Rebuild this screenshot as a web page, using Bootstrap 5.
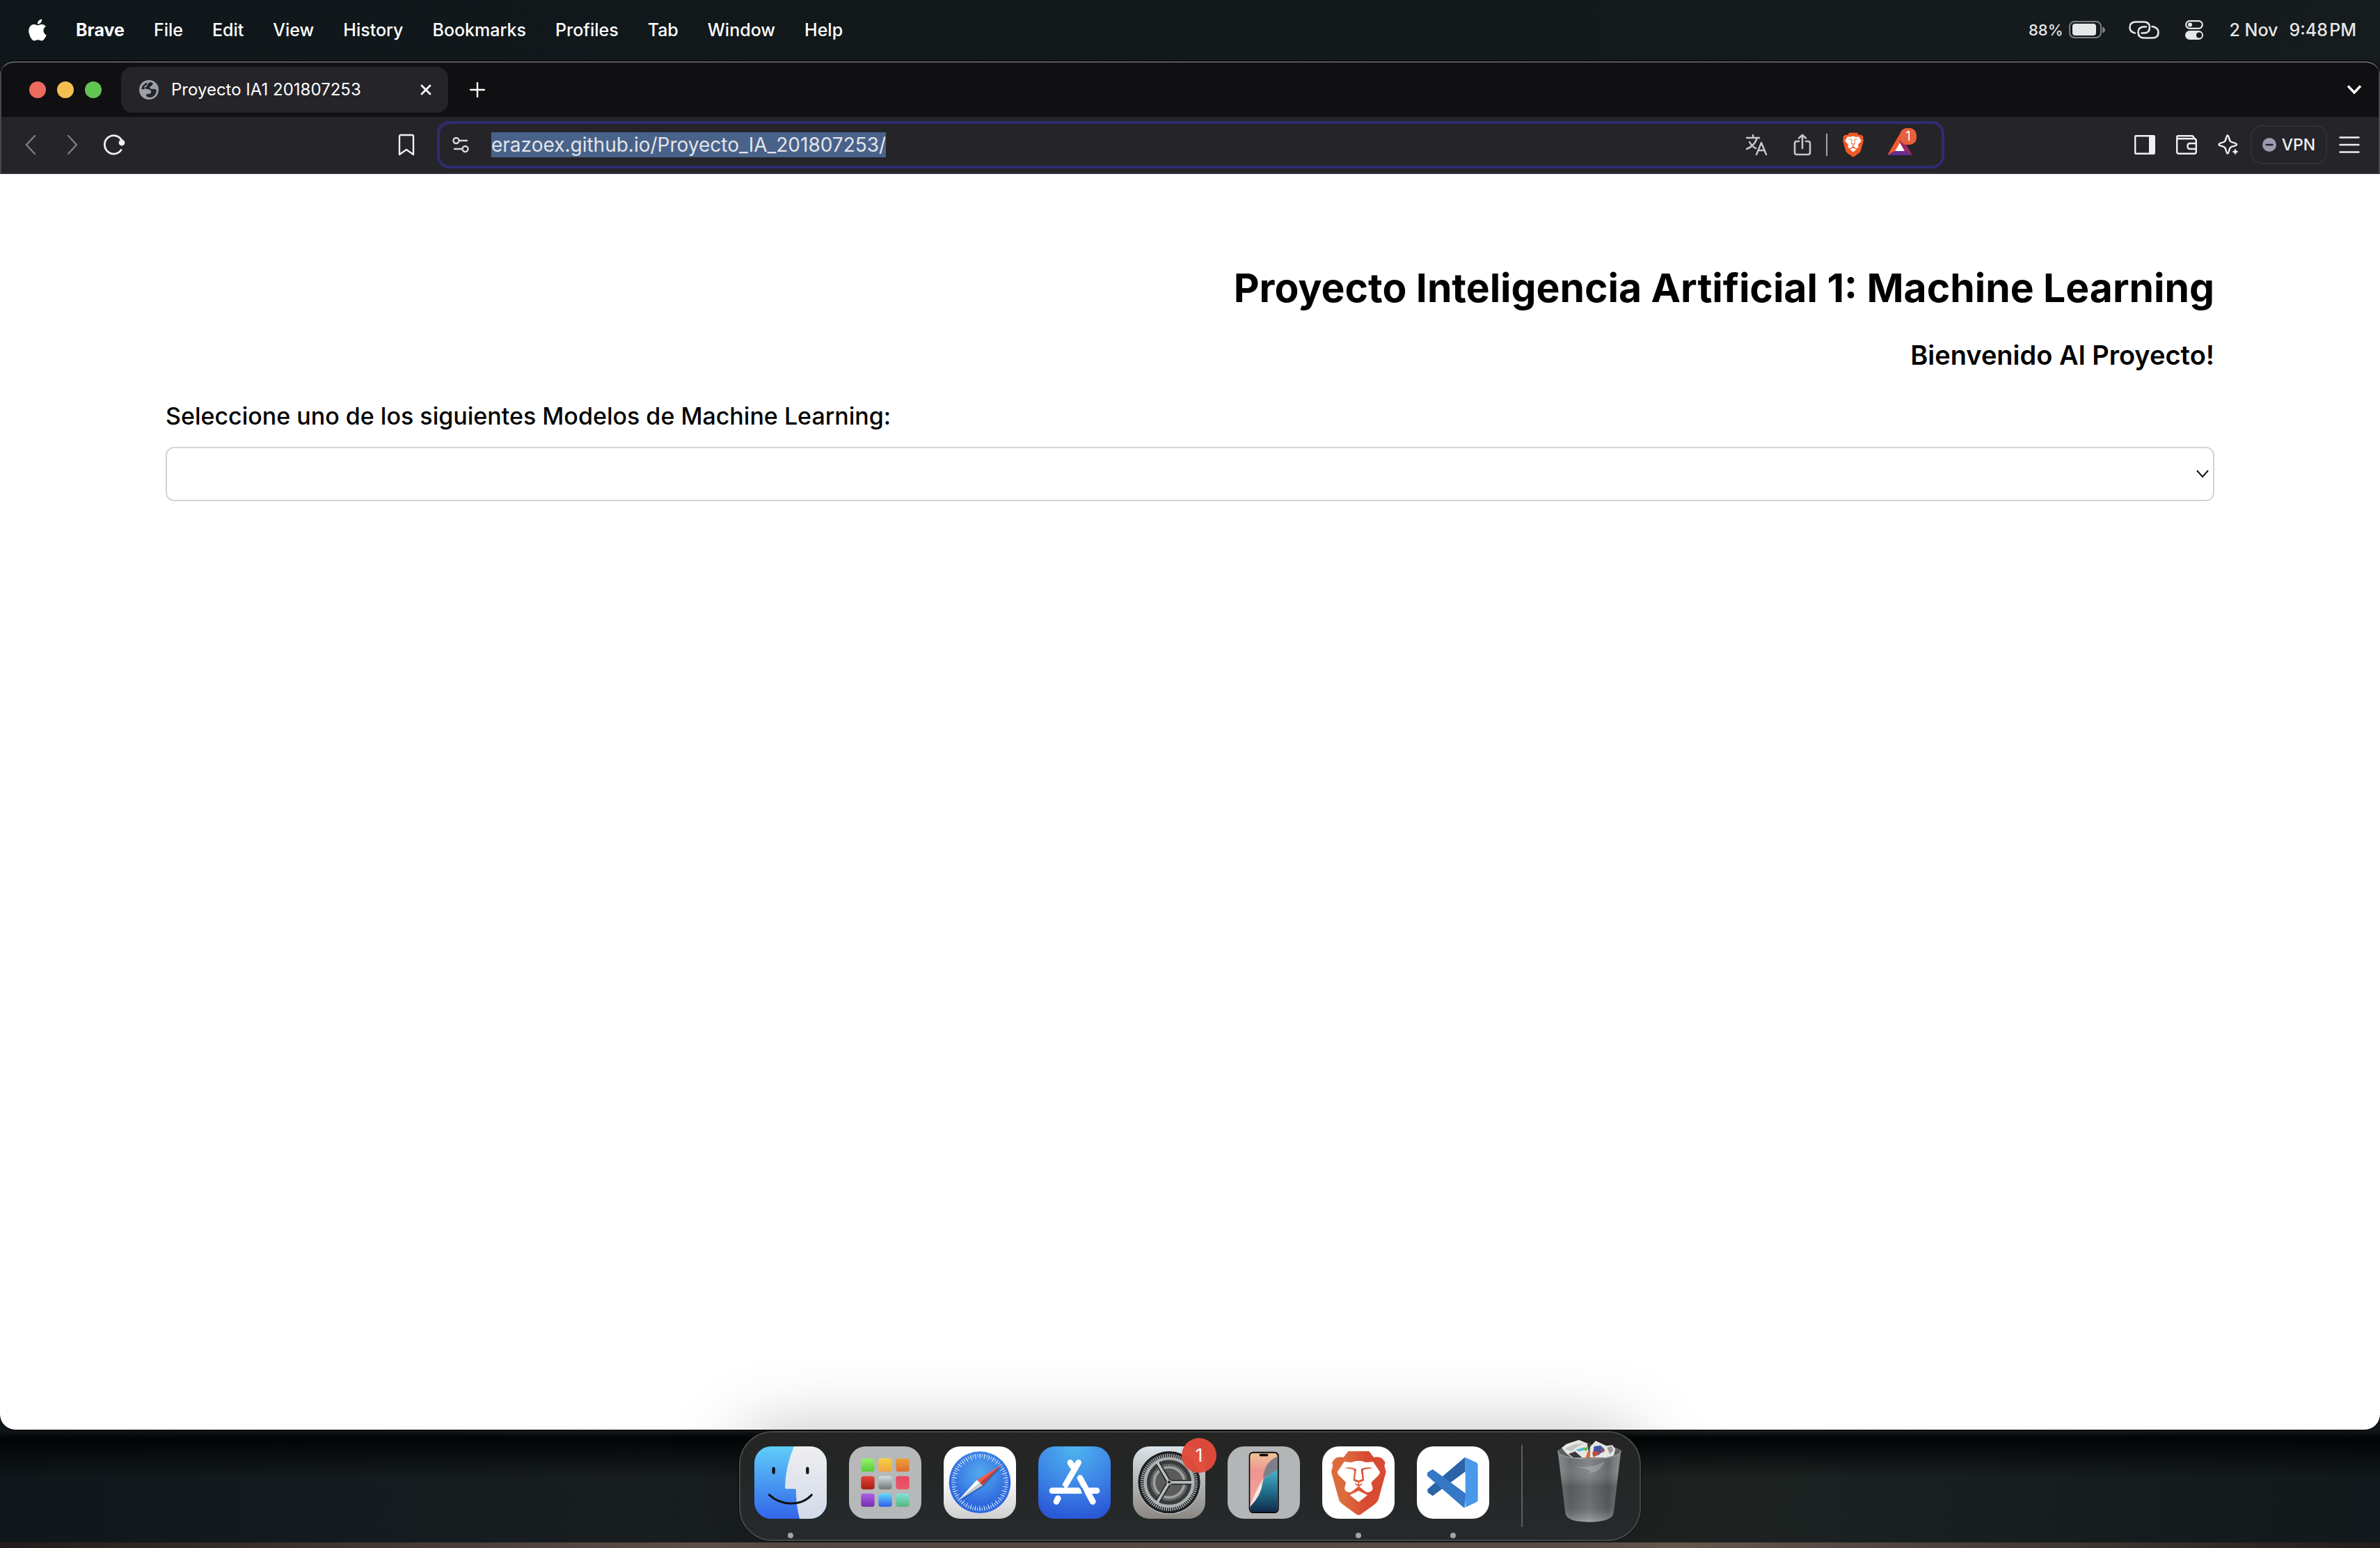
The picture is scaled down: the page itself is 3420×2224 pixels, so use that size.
<!DOCTYPE html>
<html lang="es">
<head>
<meta charset="utf-8">
<meta name="viewport" content="width=device-width, initial-scale=1">
<title>Proyecto IA1 201807253</title>
<link href="https://cdn.jsdelivr.net/npm/bootstrap@5.3.0/dist/css/bootstrap.min.css" rel="stylesheet">
<style>
body{font-family:Inter,"Liberation Sans",sans-serif;font-size:26px;line-height:32px;color:#000;
  background:linear-gradient(180deg,#14191b calc(100% - 12px),transparent calc(100% - 5px)) no-repeat,
  linear-gradient(180deg,transparent calc(100% - 12px),#231b1b calc(100% - 8px)) no-repeat,
  #14191b}
body{background:
  linear-gradient(180deg,transparent calc(100% - 170px),#020405 calc(100% - 158px),transparent calc(100% - 100px)) no-repeat,
  linear-gradient(90deg,#231b1b,#5f4f48 30%,#66564e 70%,#231d1c) bottom/100% 8px no-repeat,
  linear-gradient(90deg,#10171a,#191e21 30%,#1e2322 70%,#12181b)}
svg{display:block;flex:none}
.plain{background:none;border:0;padding:0;color:inherit;display:flex;align-items:center;justify-content:center}
.menubar{height:88px;padding:0 34px 2px 41px;color:#fff;font-size:25px;font-weight:500;background:linear-gradient(90deg,#10171a,#161b1d)}
.menubar .menus{gap:42px}
.menubar a{color:inherit;text-decoration:none}
.status-area{color:#e6e7e7}
.status-area .extras{gap:37px;margin:0 38px 0 34px}
.pct{font-size:22px}
.win{border-top:2px solid #5c5d5e;border-radius:20px 20px 22px 22px;background:#fff;overflow:hidden;margin-bottom:2px;box-shadow:0 0 0 1px #000}
.strip,.toolbar{border:solid #47484a;border-width:0 2px}
.strip{height:78px;background:#101012;padding:0 24px 0 40px;color:#fff}
.light{width:24px;height:24px;border-radius:50%}
.light-close{background:#ed6a5f}
.light-min{background:#f5bf4f}
.light-max{background:#61c554}
.lights{gap:16px}
.tab-item{width:470px;height:66px;background:#252429;border-radius:16px;margin:0 31px 0 28px;padding:0 24px 0 26px;font-size:24px;gap:18px}
.toolbar{height:82px;background:#252429;border-bottom:2px solid #343138;color:#f0f0f4}
.toolbar .side-l{width:626px;padding:0 14px 0 12px}
.toolbar .side-r{width:624px;padding-right:12px;gap:2px}
.tb{width:60px;height:60px}
.omni{height:68px;border:4px solid #2f2c73;border-radius:18px;padding:0 42px 0 18px}
.omni input{background:transparent;border:0;outline:0;color:#e4e4e8;font-size:28px;line-height:36px;height:36px;padding:0;margin-left:32px;min-width:0}
.omni input::selection{background:rgba(73,99,140,.99);color:#e4e4e8}
.acts{gap:20px;color:#c5c5ca}
.acts .rule{width:2px;height:32px;background:#a5a5aa}
.shields{color:#f05a24}
.count{left:22px;top:-8px;min-width:24px;height:24px;border-radius:10px;background:#e8603c;color:#fff;font-size:18px;line-height:24px;text-align:center}
.vpn{width:110px;height:56px;border:2px solid #313036;border-radius:16px;font-size:23px;gap:8px;font-weight:500}
.page-body{padding:128px 238px 0}
.page-body h1{font-size:57px;line-height:72px;font-weight:700;margin-bottom:32px}
.page-body h2{font-size:38px;line-height:56px;font-weight:600;margin-bottom:32px}
.page-body label{font-size:34px;line-height:56px;font-weight:500;margin-bottom:16px}
.pick{height:78px;border:2px solid #d1d5db;border-radius:12px;font-size:32px;
  background-image:url("data:image/svg+xml,%3Csvg xmlns='http://www.w3.org/2000/svg' viewBox='0 0 18 12'%3E%3Cpath fill='none' stroke='%23111' stroke-width='2' d='M1 1l8 9 8-9'/%3E%3C/svg%3E");background-size:18px 12px;background-position:right 6px center}
.dock{height:158px;margin-bottom:10px;border:2px solid #454849;border-radius:48px;padding:20px;gap:32px;background:linear-gradient(180deg,#242423,#262a2c);box-shadow:0 0 100px rgba(0,0,0,.25),0 0 0 1px rgba(0,0,0,.5)}
.dock .plain{width:104px;height:104px;position:relative}
.tile{width:104px;height:104px;border-radius:24px}
.run::after{content:"";position:absolute;left:48px;top:124px;width:8px;height:8px;border-radius:50%;background:#a3a4a6}
.notice{left:70px;top:-12px;width:50px;height:50px;border-radius:50%;background:#e24b3b;color:#fff;font-size:26px;line-height:50px;text-align:center;opacity:.97}
.split{width:2px;height:118px;background:#5b5d5e;margin:-2px 12px 0 14px}
</style>
<script src="https://cdn.jsdelivr.net/npm/bootstrap@5.3.0/dist/js/bootstrap.bundle.min.js"></script>
</head>
<body class="d-flex flex-column min-vh-100">
<svg width="0" height="0" class="position-absolute" aria-hidden="true">
  <defs>
    <symbol id="lion" viewBox="156 190 242 284">
      <path d="M232 195H322L342 221Q368 216 380 228L392 243L388 257L395 284L363 400Q360 415 340 428L288 466Q277 474 266 466L214 428Q194 415 191 400L159 284L166 257L162 243L174 228Q186 216 212 221Z"/>
      <path fill="#fff" d="M215 240L245 243Q262 236 277 236Q292 236 309 243L339 240L369 284Q369 292 362 299L333 328Q330 336 336 346Q342 364 326 370Q316 374 306 369L277 345L248 369Q238 374 228 370Q212 364 218 346Q224 336 221 328L192 299Q185 292 185 284ZM277 365L315 384L277 414L239 384Z"/>
      <path d="M215 268Q240 261 264 270L268 276L262 314L277 320L292 314L286 276L290 270Q314 261 339 268L306 272Q296 273 296 282L300 318L277 328L254 318L258 282Q258 273 248 272Z"/>
      <path fill="#fff" d="M264 268H290L287 276L293 315L277 321L261 315L267 276Z"/>
      <path d="M254 320L277 328L300 320L304 328L281 345L277 349L273 345L250 328Z" fill="#fff"/>
      <path fill="none" stroke="currentColor" stroke-width="5" d="M255 317Q263 326 277 326Q291 326 299 317M277 326V347M277 345L262 334M277 345L292 334"/>
    </symbol>
  </defs>
</svg>

<header class="menubar d-flex align-items-center justify-content-between">
  <nav class="menus d-flex align-items-center" aria-label="Barra de menús">
    <svg width="26" height="32" viewBox="2 0 20 24" fill="#fff"><path d="M12.152 6.896c-.948 0-2.415-1.078-3.96-1.04-2.04.027-3.91 1.183-4.961 3.014-2.117 3.675-.546 9.103 1.519 12.09 1.013 1.454 2.208 3.09 3.792 3.039 1.52-.065 2.09-.987 3.935-.987 1.831 0 2.35.987 3.96.948 1.637-.026 2.676-1.48 3.676-2.948 1.156-1.688 1.636-3.325 1.662-3.415-.039-.013-3.182-1.221-3.22-4.857-.026-3.04 2.48-4.494 2.597-4.559-1.429-2.09-3.623-2.324-4.39-2.376-2-.156-3.675 1.09-4.61 1.09zM15.53 3.83c.843-1.012 1.4-2.427 1.245-3.83-1.207.052-2.662.805-3.532 1.818-.78.896-1.454 2.338-1.273 3.714 1.338.104 2.715-.688 3.559-1.701"/></svg>
    <a href="#" class="fw-bold">Brave</a><a href="#">File</a><a href="#">Edit</a><a href="#">View</a><a href="#">History</a><a href="#">Bookmarks</a><a href="#">Profiles</a><a href="#">Tab</a><a href="#">Window</a><a href="#">Help</a>
  </nav>
  <div class="status-area d-flex align-items-center">
    <span class="pct">88%</span>
    <svg class="ms-2" width="52" height="26" viewBox="0 0 52 26"><rect x="1" y="1" width="45" height="23" rx="7" fill="none" stroke="#7c8081" stroke-width="2"/><rect x="5" y="4" width="34" height="17" rx="4" fill="#e6e7e7"/><path d="M48 8.500q4 1 4 4.500t-4 4.500z" fill="#7c8081"/></svg>
    <div class="extras d-flex align-items-center">
      <svg width="44" height="26" viewBox="0 0 44 26" fill="none" stroke="#e6e7e7" stroke-width="2.600" stroke-linecap="round"><path d="M9 17.500Q1.500 16 1.500 9.500Q1.500 1.500 10 1.500H21.500Q30 1.500 30 9.500Q30 17.500 21.500 17.500H18.500"/><path d="M33.500 8Q42.500 9.500 42.500 16.500Q42.500 24.500 34 24.500H22Q13.500 24.500 13.500 16.500Q13.500 8.500 22 8.500H25"/></svg>
      <svg width="26" height="28" viewBox="0 0 26 28"><rect x="1.200" y="1.200" width="23.600" height="10.600" rx="5.300" fill="none" stroke="#e6e7e7" stroke-width="2.200"/><circle cx="7" cy="6.500" r="3" fill="#e6e7e7"/><rect y="15" width="26" height="13" rx="6.500" fill="#e6e7e7"/><circle cx="20" cy="21.500" r="4" fill="#14191b"/></svg>
    </div>
    <span>2 Nov</span><span class="ms-3">9:48&#8202;PM</span>
  </div>
</header>

<section class="win flex-grow-1 d-flex flex-column">
  <div class="strip d-flex align-items-center">
    <div class="lights d-flex"><span class="light light-close"></span><span class="light light-min"></span><span class="light light-max"></span></div>
    <div class="tab-item d-flex align-items-center">
      <svg width="28" height="28" viewBox="0 0 28 28"><circle cx="14" cy="14" r="14" fill="#9aa0a6"/><path fill="#252429" d="M16 3Q13 4 12 6Q12 9 9 10Q8 12 11 13Q16 13 17 16Q18 19 14 20Q10 19 10 23Q13 25.500 17 25Q24 23 25 15Q23 12 19 13Q15 13 15 10Q19 8 20 5Q18 3 16 3ZM11 3.500Q4 7 3.200 13Q7 14 8.500 12Q6 9 9 8Q12 7 11 3.500Z"/></svg>
      <span class="flex-grow-1">Proyecto IA1 201807253</span>
      <button class="plain" aria-label="Cerrar pestaña"><svg width="16" height="16" viewBox="0 0 16 16" stroke="#fff" stroke-width="2.800" stroke-linecap="round"><path d="M2 2l12 12M14 2L2 14"/></svg></button>
    </div>
    <button class="plain" aria-label="Nueva pestaña"><svg width="22" height="22" viewBox="0 0 22 22" stroke="#fff" stroke-width="2.400" stroke-linecap="round"><path d="M11 1v20M1 11h20"/></svg></button>
    <button class="plain ms-auto" aria-label="Buscar pestañas"><svg width="22" height="14" viewBox="0 0 22 14" fill="none" stroke="#fff" stroke-width="3.400"><path d="M2 1.500l9 9.500 9-9.500"/></svg></button>
  </div>
  <div class="toolbar d-flex align-items-center">
    <div class="side-l d-flex">
      <button class="plain tb" aria-label="Atrás"><svg width="16" height="30" viewBox="0 0 16 30" fill="none" stroke="#7b7b80" stroke-width="2.400" stroke-linecap="round"><path d="M14 2L2 15l12 13"/></svg></button>
      <button class="plain tb" aria-label="Adelante"><svg width="16" height="30" viewBox="0 0 16 30" fill="none" stroke="#7b7b80" stroke-width="2.400" stroke-linecap="round"><path d="M2 2l12 13L2 28"/></svg></button>
      <button class="plain tb" aria-label="Recargar"><svg width="32" height="30" viewBox="0 0 32 30" fill="none" stroke="#f0f0f4" stroke-width="2.800" stroke-linecap="round"><path d="M26 22.500A13 13.200 0 1 1 27 9"/><circle cx="27" cy="12" r="3" fill="#f0f0f4"/></svg></button>
      <button class="plain tb ms-auto" aria-label="Marcador"><svg width="24" height="32" viewBox="0 0 24 32" fill="none" stroke="#f0f0f4" stroke-width="2.400" stroke-linejoin="round"><path d="M2 30V4Q2 2 4 2H20Q22 2 22 4V30L12 23Z"/></svg></button>
    </div>
    <div class="omni flex-grow-1 d-flex align-items-center">
      <svg width="24" height="24" viewBox="0 0 24 24" fill="none" stroke="#d8d8dc" stroke-width="2.400" stroke-linecap="round"><circle cx="5.500" cy="6" r="4"/><path d="M10 6h11M3 18h10"/><circle cx="18.500" cy="18" r="4"/></svg>
      <input id="url" class="flex-grow-1" type="text" aria-label="Dirección" value="erazoex.github.io/Proyecto_IA_201807253/" spellcheck="false">
      <div class="acts d-flex align-items-center">
        <button class="plain" aria-label="Traducir"><svg width="32" height="30" viewBox="0 0 32 30" fill="none" stroke="currentColor" stroke-width="2.500" stroke-linecap="round" stroke-linejoin="round"><path d="M2 5h18M11 1v4M17 5Q13 17 2 21M6 11Q10 18 15 20M16 29l7-17 7 17M18.500 23h9"/></svg></button>
        <button class="plain ms-3" aria-label="Compartir"><svg width="28" height="32" viewBox="0 0 28 32" fill="none" stroke="currentColor" stroke-width="2.600" stroke-linecap="round" stroke-linejoin="round"><path d="M9 11H6Q3 11 3 14V27Q3 30 6 30H22Q25 30 25 27V14Q25 11 22 11H19M14 21V2M9 6.500L14 2L19 6.500"/></svg></button>
        <span class="rule"></span>
        <button class="plain shields" aria-label="Brave Shields"><svg width="34" height="36" fill="currentColor"><use href="#lion"/></svg></button>
        <button class="plain position-relative ms-2" aria-label="Brave Rewards"><svg width="36" height="32" viewBox="0 0 36 32" class="ms-1"><path fill="#f15a2b" d="M18 0L0 31L11 25L18 13Z"/><path fill="#9c2a62" d="M18 0L36 31L25 25L18 13Z"/><path fill="#662d91" d="M0 31H36L25 25H11Z"/><path fill="#fff" d="M18 13L25 25H11Z"/></svg><span class="count position-absolute">1</span></button>
      </div>
    </div>
    <div class="side-r d-flex align-items-center justify-content-end">
      <div class="d-flex">
        <button class="plain tb" aria-label="Panel lateral"><svg width="30" height="28" viewBox="0 0 30 28"><rect x="1.200" y="1.200" width="27.600" height="25.600" rx="1" fill="none" stroke="#f0f0f4" stroke-width="2.400"/><path fill="#f0f0f4" d="M21 1h8v26h-8z"/></svg></button>
        <button class="plain tb" aria-label="Cartera"><svg width="30" height="28" viewBox="0 0 30 28" fill="none" stroke="#f0f0f4" stroke-width="2.400" stroke-linejoin="round"><path d="M1.200 5V24Q1.200 26.800 4 26.800H26Q28.800 26.800 28.800 24V8Q28.800 5.200 26 5.200H3Q1.200 5 1.200 3Q1.200 1.200 3 1.200H23Q25 1.200 26 5M28.800 12H20Q16.500 12 16.500 16T20 20H28.800"/></svg></button>
        <button class="plain tb" aria-label="Leo"><svg width="30" height="30" viewBox="0 0 30 30"><path fill="none" stroke="#f0f0f4" stroke-width="2.400" stroke-linejoin="round" d="M14 1.500C16 1.500 16 9 18.500 10.500C20 12 27 12 27 14.500C27 17 20 17 18.500 18.500C16 20.500 16 27.500 14 27.500C12 27.500 12 20.500 9.500 18.500C8 17 1.500 17 1.500 14.500C1.500 12 8 12 9.500 10.500C12 9 12 1.500 14 1.500Z"/><path fill="#f0f0f4" stroke="#252429" stroke-width="1" d="M25 19L26.800 23.200L31 25L26.800 26.800L25 31L23.200 26.800L19 25L23.200 23.200Z"/></svg></button>
      </div>
      <button class="plain vpn"><svg width="20" height="20" viewBox="0 0 20 20"><circle cx="10" cy="10" r="10" fill="#9a9bb0"/><path stroke="#252429" stroke-width="2.400" stroke-linecap="round" d="M5.500 10h9"/></svg>VPN</button>
      <button class="plain tb" aria-label="Menú"><svg width="30" height="26" viewBox="0 0 30 26" stroke="#f0f0f4" stroke-width="2.400" stroke-linecap="round"><path d="M1.500 2.500h27M1.500 13h27M1.500 23.500h27"/></svg></button>
    </div>
  </div>
  <main class="page-body flex-grow-1">
    <h1 class="text-end">Proyecto Inteligencia Artificial 1: Machine Learning</h1>
    <h2 class="text-end">Bienvenido Al Proyecto!</h2>
    <label for="modelo" class="d-block">Seleccione uno de los siguientes Modelos de Machine Learning:</label>
    <select id="modelo" class="form-select pick"><option value="" selected></option></select>
  </main>
</section>

<footer class="d-flex justify-content-center">
  <div class="dock d-flex position-relative">
    <button class="plain run" aria-label="Finder"><svg class="tile" viewBox="132 174 312 312"><defs><linearGradient id="fa" x2="0" y2="1"><stop stop-color="#5fcdf9"/><stop offset="1" stop-color="#3265ea"/></linearGradient><linearGradient id="fb" x2="0" y2="1"><stop stop-color="#eeeeef"/><stop offset="1" stop-color="#d2dae8"/></linearGradient></defs><path fill="url(#fa)" d="M132 174H444V486H132Z"/><path fill="url(#fb)" d="M303 174H444V486H327Q312 430 311 357H270Q264 357 264 350Q266 260 303 174Z"/><g fill="none" stroke="#111" stroke-linecap="round"><path stroke-width="13" d="M215 269v18M361 269v18"/><path stroke-width="9" d="M196 383Q235 420 290 420T379 383"/></g></svg></button>
    <button class="plain" aria-label="Launchpad"><svg class="tile" viewBox="540 174 312 312"><defs><linearGradient id="l1" x2="0" y2="1"><stop stop-color="#96f36d"/><stop offset="1" stop-color="#56cd38"/></linearGradient><linearGradient id="l2" x2="0" y2="1"><stop stop-color="#f7d044"/><stop offset="1" stop-color="#f0a43a"/></linearGradient><linearGradient id="l3" x2="0" y2="1"><stop stop-color="#eda138"/><stop offset="1" stop-color="#dd6c32"/></linearGradient><linearGradient id="l4" x2="0" y2="1"><stop stop-color="#e6453a"/><stop offset="1" stop-color="#a51d15"/></linearGradient><linearGradient id="l5" x2="0" y2="1"><stop stop-color="#d0dfe6"/><stop offset="1" stop-color="#737777"/></linearGradient><linearGradient id="l6" x2="0" y2="1"><stop stop-color="#ec4560"/><stop offset="1" stop-color="#e95967"/></linearGradient><linearGradient id="l7" x2="0" y2="1"><stop stop-color="#b05ee3"/><stop offset="1" stop-color="#7130b0"/></linearGradient><linearGradient id="l8" x2="0" y2="1"><stop stop-color="#62d8fb"/><stop offset="1" stop-color="#2f5fe9"/></linearGradient><linearGradient id="l9" x2="0" y2="1"><stop stop-color="#86e0d8"/><stop offset="1" stop-color="#50ba7e"/></linearGradient></defs><path fill="#b6b8b9" d="M540 174H852V486H540Z"/><rect x="592" y="226" width="58" height="57" rx="11" fill="url(#l1)"/><rect x="667" y="226" width="58" height="57" rx="11" fill="url(#l2)"/><rect x="742" y="226" width="58" height="57" rx="11" fill="url(#l3)"/><rect x="592" y="302" width="58" height="57" rx="11" fill="url(#l4)"/><rect x="667" y="302" width="58" height="57" rx="11" fill="url(#l5)"/><rect x="742" y="302" width="58" height="57" rx="11" fill="url(#l6)"/><rect x="592" y="377" width="58" height="57" rx="11" fill="url(#l7)"/><rect x="667" y="377" width="58" height="57" rx="11" fill="url(#l8)"/><rect x="742" y="377" width="58" height="57" rx="11" fill="url(#l9)"/></svg></button>
    <button class="plain" aria-label="Safari"><svg class="tile" viewBox="948 174 312 312"><defs><linearGradient id="sa" x2="0" y2="1"><stop offset=".4" stop-color="#fff"/><stop offset="1" stop-color="#cfcfd0"/></linearGradient><radialGradient id="sb" cy=".35"><stop stop-color="#53a9ee"/><stop offset=".6" stop-color="#3f86e6"/><stop offset="1" stop-color="#2f69dd"/></radialGradient></defs><path fill="url(#sa)" d="M948 174H1260V486H948Z"/><circle cx="1104" cy="329" r="133" fill="url(#sb)"/><circle cx="1104" cy="329" r="116" fill="none" stroke="#d4e8fb" stroke-width="13" pathLength="360" stroke-dasharray="1.500 3.500" stroke-dashoffset=".75"/><circle cx="1104" cy="329" r="112" fill="none" stroke="#d4e8fb" stroke-width="21" pathLength="360" stroke-dasharray="1.500 8.500" stroke-dashoffset=".75"/><path fill="#1d4c9c" opacity=".5" d="M1204 256L1120 347L1016 412L1050 380Z"/><path fill="#ef6054" d="M1199 252L1091 319L1104 331Z"/><path fill="#c93a30" d="M1199 252L1104 331L1116 342Z"/><path fill="#fff" d="M1009 409L1091 319L1104 331Z"/><path fill="#c9cbcf" d="M1009 409L1104 331L1116 342Z"/></svg></button>
    <button class="plain" aria-label="App Store"><svg class="tile" viewBox="96 174 312 312"><defs><radialGradient id="aa" cy="0" r="1"><stop stop-color="#4fb6ef"/><stop offset=".6" stop-color="#3b82e6"/><stop offset="1" stop-color="#2a58d6"/></radialGradient></defs><path fill="url(#aa)" d="M96 174H408V486H96Z"/><g fill="none" stroke="#fff" stroke-linecap="round" stroke-width="26"><path d="M234 244L242 258M276 310L331 412M181 398L174 412M320 365H348"/><path d="M269 244L213 341"/><path d="M156 365H268"/></g><path fill="#fff" d="M264 352H270Q282 362 284 378H264Z"/><path fill="#3a80e4" d="M208 352L200 352L205 340ZM286 352L298 378H286Q285 362 270 352Z"/></svg></button>
    <button class="plain" aria-label="Ajustes del Sistema"><svg class="tile" viewBox="504 174 312 312"><defs><linearGradient id="ga" x2="0" y2="1"><stop stop-color="#d9e3e9"/><stop offset="1" stop-color="#8b8783"/></linearGradient></defs><path fill="url(#ga)" d="M504 174H816V486H504Z"/><circle cx="660" cy="331" r="135" fill="#c9cdcf"/><circle cx="660" cy="329" r="134" fill="#1e1f20"/><circle cx="660" cy="329" r="116" fill="none" stroke="#aab0b2" stroke-width="15" pathLength="360" stroke-dasharray="2.300 2.200"/><circle cx="660" cy="329" r="103" fill="#3a3b3b" stroke="#aab0b2" stroke-width="13"/><circle cx="660" cy="329" r="75" fill="none" stroke="#8c9091" stroke-width="10" pathLength="360" stroke-dasharray="3 3"/><circle cx="660" cy="329" r="65" fill="#5a5b5a" stroke="#9da2a3" stroke-width="11"/><g fill="none" stroke="#2a2b2b" stroke-width="22"><path d="M660 329H755M660 329L612 247M660 329L612 411"/></g><g fill="none" stroke="#b9bec0" stroke-width="11" stroke-linecap="round"><path d="M660 329H760M660 329L609 243M660 329L609 415"/></g><circle cx="660" cy="329" r="11" fill="#aeb3b5"/><circle cx="660" cy="328" r="6" fill="#222"/></svg><span class="notice position-absolute">1</span></button>
    <button class="plain" aria-label="Duplicación del iPhone"><svg class="tile" viewBox="912 174 312 312"><defs><linearGradient id="pa" x2="0" y2="1"><stop stop-color="#efc495"/><stop offset=".3" stop-color="#ef9590"/><stop offset="1" stop-color="#f0aaa7"/></linearGradient><linearGradient id="pb" x2="0" y2="1"><stop stop-color="#4db4ca"/><stop offset=".5" stop-color="#22728f"/><stop offset="1" stop-color="#102b49"/></linearGradient></defs><path fill="#b4b5b6" d="M912 174H1224V486H912Z"/><rect x="1004" y="197" width="129" height="265" rx="19" fill="#0b0b0d"/><rect x="1009" y="203" width="118" height="253" rx="13" fill="url(#pa)"/><path fill="#7f7f89" d="M1127 218Q1070 240 1065 312L1127 275Z"/><path fill="#f6e6e2" d="M1065 316Q1040 350 1009 430V436L1065 370Z"/><path fill="url(#pb)" d="M1127 273L1080 304Q1066 312 1063 330Q1058 385 1009 434V443Q1009 456 1022 456H1114Q1127 456 1127 443Z"/><rect x="1049" y="206" width="38" height="11" rx="5" fill="#08080a"/></svg></button>
    <button class="plain run" aria-label="Brave"><svg class="tile" viewBox="120 174 312 312"><defs><linearGradient id="ba"><stop offset=".25" stop-color="#dc6b3d"/><stop offset=".65" stop-color="#d84a31"/></linearGradient></defs><path fill="#fff" d="M120 174H432V486H120Z"/><g color="#da5a36" fill="url(#ba)"><use href="#lion" x="156" y="190" width="242" height="284"/></g></svg></button>
    <button class="plain run" aria-label="Visual Studio Code"><svg class="tile" viewBox="528 174 312 312"><path fill="#fff" d="M528 174H840V486H528Z"/><path fill="#2a63a6" stroke="#2a63a6" stroke-width="6" stroke-linejoin="round" d="M734 226V281L596 384L577 370V360Z"/><path fill="#3578c6" stroke="#3578c6" stroke-width="6" stroke-linejoin="round" d="M576 288V300L731 435L737 380L596 276Z"/><path fill="#4a98e9" d="M736 221L784 243Q791 247 791 254V404Q791 411 784 415L733 439Q737 436 737 430V230Q737 224 730 223Z"/></svg></button>
    <span class="split"></span>
    <button class="plain" aria-label="Papelera"><svg width="104" height="104" overflow="visible" viewBox="1116 174 312 312"><defs><linearGradient id="ta"><stop stop-color="#878b8e"/><stop offset=".2" stop-color="#6c7072"/><stop offset=".5" stop-color="#83878a"/><stop offset=".8" stop-color="#64686b"/><stop offset="1" stop-color="#8f9396"/></linearGradient><linearGradient id="tb" x2="0" y2="1"><stop offset=".2" stop-color="#fff" stop-opacity="0"/><stop offset=".5" stop-color="#000" stop-opacity=".2"/><stop offset=".8" stop-color="#000" stop-opacity=".15"/><stop offset="1" stop-color="#fff" stop-opacity=".25"/></linearGradient></defs><ellipse cx="1272" cy="196" rx="137" ry="30" fill="#5d6163"/><path fill="#e6e6e4" d="M1152 180L1172 164L1226 146L1266 162L1275 176L1299 150L1345 172L1370 168L1384 186L1376 214L1345 222L1200 224L1172 204Z"/><path fill="#c4c4c2" d="M1166 184L1210 164L1250 160L1220 176L1190 196Z"/><path fill="#39393b" d="M1182 206L1210 196L1240 222H1202ZM1262 164L1278 160L1270 206Z"/><path fill="#49b8d8" d="M1214 188L1244 180L1252 190L1226 196Z"/><path fill="#5cbf45" d="M1240 180L1268 178L1258 196Z"/><path fill="#d46c3c" d="M1262 200L1276 190L1274 226L1256 224Z"/><path fill="#3c55a8" d="M1292 174L1320 170L1338 188L1310 212L1286 214Z"/><path fill="#b84d37" d="M1284 200L1304 192L1316 204L1290 222ZM1318 184L1340 192L1328 202Z"/><path fill="#9b9b99" d="M1348 180L1366 172L1376 190L1360 208Z"/><path fill="url(#ta)" d="M1135 192Q1140 226 1272 228Q1404 226 1408 192L1376 460Q1370 500 1270 500T1168 460Z"/><path fill="url(#tb)" d="M1135 192Q1140 226 1272 228Q1404 226 1408 192L1376 460Q1370 500 1270 500T1168 460Z"/><path fill="#c4c8ca" opacity=".35" d="M1200 262Q1290 270 1336 238Q1324 284 1270 290Q1300 276 1200 262Z"/><path fill="none" stroke="#a9adaf" stroke-width="3" d="M1135 192Q1140 226 1272 228Q1404 226 1408 192"/></svg></button>
  </div>
</footer>
<script>
  const url = document.getElementById('url');
  url.focus({preventScroll: true});
  url.select();
</script>
</body>
</html>
